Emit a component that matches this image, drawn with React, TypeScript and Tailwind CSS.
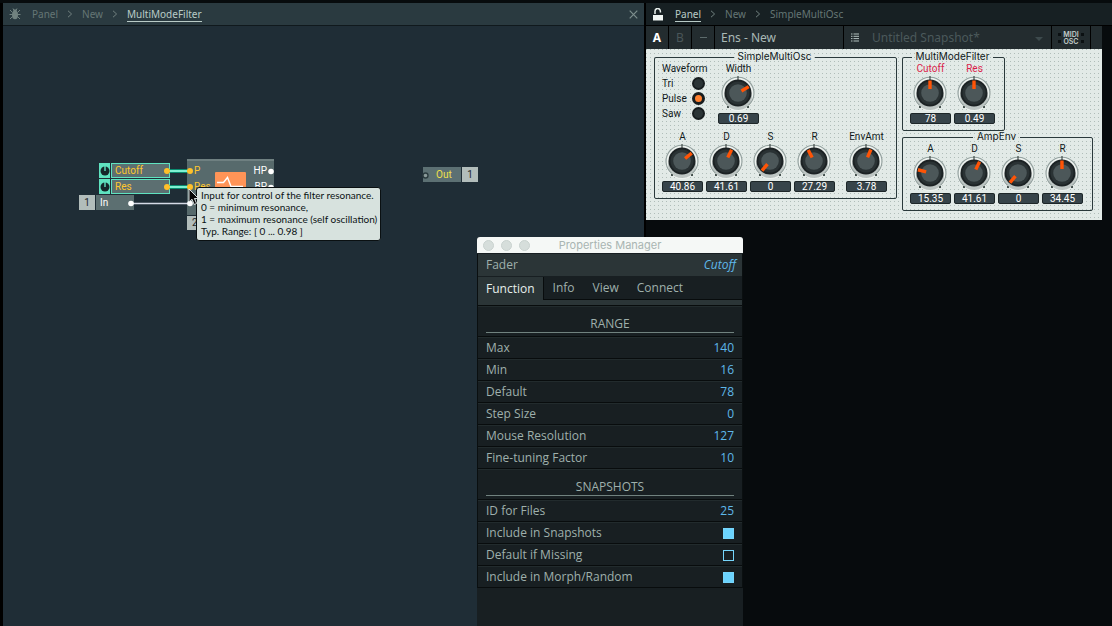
import { useId, useState } from "react";

type KnobProps = { label: string; initial: number; min?: number; max: number; accent?: boolean };

function Knob({ label, initial, min = 0, max, accent = false }: KnobProps) {
  const [value, setValue] = useState(initial);
  const angle = -140 + (280 * (value - min)) / (max - min);
  return (
    <label className="flex w-[41px] flex-col items-center">
      <span className={`h-3 text-[10px] leading-3 whitespace-nowrap ${accent ? "text-[#dc1f4c]" : "text-[#10181a]"}`}>
        {label}
      </span>
      <span className="relative block h-[38px] w-[41px]">
        <svg viewBox="-20 -18 41 38" className="block h-[38px] w-[41px]" aria-hidden="true">
          <circle r="17" cy="1" fill="#f1f5f3" opacity="0.8" />
          <path d="M-10.4 12.4A16 16 0 1 1 10.4 12.4" fill="none" stroke="#93a19f" strokeWidth="1.2" />
          <path d="M0-17V-13" stroke="#26302f" strokeWidth="1" />
          <rect x="-11" y="13" width="2" height="2" fill="#46524f" />
          <rect x="9" y="13" width="2" height="2" fill="#46524f" />
          <ellipse cy="4" rx="14" ry="13" fill="#8e9a98" opacity="0.5" />
          <circle r="13.5" fill="#1c2224" />
          <circle r="11.5" fill="#2a3234" />
          <circle r="8.8" fill="#4c5759" />
          <path d="M0-4V-12.500" stroke="#ff5406" strokeWidth="3.4" transform={`rotate(${angle})`} />
        </svg>
        <input
          type="range"
          min={min}
          max={max}
          step="any"
          value={value}
          onChange={(e) => setValue(Math.round(Number(e.target.value) * 100) / 100)}
          className="absolute inset-0 h-full w-full cursor-pointer opacity-0"
        />
      </span>
      <output className="h-[11px] w-full rounded-[2px] border border-[#1d2628] bg-[#37444a] text-center text-[10px] leading-[9px] text-white">
        {value}
      </output>
    </label>
  );
}

function Group({ title, children }: { title: string; children: React.ReactNode }) {
  return (
    <fieldset className="rounded-[2px] border border-[#2a393b] pr-[9px] pb-[6px] pl-[7px]">
      <legend className="mx-auto h-3 px-1 font-['Inter',sans-serif] text-[10px] leading-[10px] text-[#10181a]">{title}</legend>
      {children}
    </fieldset>
  );
}

function WaveformPicker() {
  const [wave, setWave] = useState("Pulse");
  return (
    <div role="radiogroup" aria-label="Waveform" className="w-[43px] text-[10px] text-[#10181a]">
      <div className="h-[13px] leading-3">Waveform</div>
      {["Tri", "Pulse", "Saw"].map((name) => (
        <label key={name} className="flex h-[15px] items-center justify-between leading-3">
          {name}
          <input
            type="radio"
            name="waveform"
            checked={wave === name}
            onChange={() => setWave(name)}
            className="size-[13px] appearance-none rounded-full border-2 border-[#171d1f] bg-[#2b3436] checked:border-[3px] checked:bg-[#ff8130]"
          />
        </label>
      ))}
    </div>
  );
}

function Crumbs({ items, active }: { items: string[]; active: number }) {
  return (
    <nav className="flex items-center text-[10px] leading-[14px]">
      {items.map((item, i) => (
        <span key={item} className="flex items-center">
          {i > 0 && (
            <svg viewBox="0 0 6 8" className="mx-[9px] h-2 w-[6px]" aria-hidden="true">
              <path d="M1 .8 4.6 4 1 7.2" fill="none" stroke="#71807f" />
            </svg>
          )}
          <a
            href="#"
            className={i === active ? "border-b border-[#b9cbc7] text-[#b9cbc7]" : "border-b border-transparent text-[#657675]"}
          >
            {item}
          </a>
        </span>
      ))}
    </nav>
  );
}

function Bug() {
  return (
    <svg viewBox="0 0 12 12" className="size-3" aria-hidden="true">
      <g fill="none" stroke="#71827f" strokeWidth="1">
        <path d="M4 .5 5 2.5M8 .5 7 2.5M1 2 3.5 4.500M11 2 8.500 4.500M.5 6.500H11.500M1 11 3.500 8.500M11 11 8.500 8.500" />
      </g>
      <ellipse cx="6" cy="7" rx="3" ry="4.200" fill="#71827f" />
      <circle cx="6" cy="3" r="1.800" fill="#71827f" />
    </svg>
  );
}

function ControlNode({ name, className }: { name: string; className: string }) {
  return (
    <div className={`absolute flex h-[15px] w-[71px] gap-px text-[10px] ${className}`}>
      <div className="flex w-[11px] items-center justify-center bg-[#5fe3c0]">
        <svg viewBox="0 0 10 10" className="size-[10px]" aria-hidden="true">
          <circle cx="5" cy="5" r="4.500" fill="#15272a" />
          <path d="M5 0V5" stroke="#5fe3c0" strokeWidth="1.400" />
        </svg>
      </div>
      <div className="flex-1 border border-[#5fe3c0] bg-[#5c6f71] pl-[3px] leading-[14px] text-[#ffc82e]">{name}</div>
    </div>
  );
}

function Patch() {
  return (
    <div className="relative flex-1 overflow-hidden bg-[#1f2d36] text-[10px] text-white">
      <ControlNode name="Cutoff" className="top-[137px] left-[96px]" />
      <ControlNode name="Res" className="top-[153px] left-[96px]" />

      <div className="absolute top-[169px] left-[76px] flex h-[15px] gap-px leading-[15px]">
        <span className="w-4 bg-[#b2bdbb] text-center text-[#1b2629]">1</span>
        <span className="w-[38px] bg-[#5c6f71] pl-1">In</span>
      </div>

      <div className="absolute top-[133px] left-[184px] h-14 w-[87px] border-t-2 border-[#6f8081] bg-[#576a6c]">
        <div className="flex justify-between pt-[2px] pr-[7px] pl-[7px] leading-4">
          <div className="text-[#ffc82e]">
            <div>P</div>
            <div>Res</div>
          </div>
          <div className="text-right">
            <div>HP</div>
            <div>BP</div>
          </div>
        </div>
        <svg viewBox="0 0 31 28" className="absolute top-[11px] left-7 h-7 w-[31px]" aria-hidden="true">
          <rect width="31" height="28" rx="1" fill="#ff9457" />
          <path d="M2 10.500H8.500L12.500 5.500L16 14.500H28" fill="none" stroke="#fff" strokeWidth="1.400" />
        </svg>
      </div>
      <div className="absolute top-[190px] left-[184px] h-[14px] w-4 bg-[#b2bdbb] pl-[5px] leading-[14px] text-[#1b2629]">2</div>

      <div className="absolute top-[141px] left-[420px] flex h-[15px] gap-px leading-[15px]">
        <span className="w-[38px] bg-[#5c7073] pl-[13px] text-[#f0e04a]">Out</span>
        <span className="w-4 bg-[#b2bdbb] text-center text-[#1b2629]">1</span>
      </div>

      <svg viewBox="0 0 480 210" className="absolute top-0 left-0 h-[210px] w-[480px]" aria-hidden="true">
        <g stroke="#0b8c70" strokeWidth="4">
          <path d="M164 145H187M164 161H187" />
        </g>
        <g stroke="#7ff0d2" strokeWidth="2">
          <path d="M164 145H187M164 161H187" />
        </g>
        <path d="M128 177.500H187" stroke="#d5dae6" strokeWidth="1.500" />
        <g fill="#ffc02a">
          <circle cx="164" cy="145" r="3" />
          <circle cx="187" cy="145" r="3" />
          <circle cx="164" cy="161" r="3" />
          <circle cx="187" cy="161" r="3" />
        </g>
        <g fill="#fff">
          <circle cx="128" cy="177.500" r="2.800" />
          <circle cx="187" cy="177.500" r="2.800" />
          <circle cx="268" cy="145.500" r="2.800" />
          <circle cx="268" cy="161.500" r="2.800" />
        </g>
        <circle cx="422.500" cy="149.500" r="2.500" fill="#8a9a9a" stroke="#2b3b3f" strokeWidth="1.400" />
      </svg>

      <div
        role="tooltip"
        className="absolute top-[161px] left-[193px] rounded-[3px] border border-[#0a1012] bg-[#d7e2de] pt-px pr-[3px] pb-[3px] pl-1 font-['Lato',sans-serif] text-[10px] leading-3 whitespace-nowrap text-[#0b1214]"
      >
        <p>Input for control of the filter resonance.</p>
        <p>0 = minimum resonance,</p>
        <p>1 = maximum resonance (self oscillation)</p>
        <p>Typ. Range: [ 0 ... 0.98 ]</p>
      </div>

      <svg viewBox="0 0 12 18" className="absolute top-[162px] left-[185px] h-[18px] w-3" aria-hidden="true">
        <path d="M1 1V14L4 11.200L6.200 16.500L8.600 15.500L6.400 10.500H10.500Z" fill="#050505" stroke="#e8eeee" strokeWidth="0.900" />
      </svg>
    </div>
  );
}

function Instrument() {
  return (
    <div className="flex w-fit gap-[5px] bg-[#e2eae7] bg-[conic-gradient(at_1px_1px,transparent_270deg,#b0bdb9_0deg)] bg-[size:4px_4px] pt-[2px] pr-[9px] pb-[9px] pl-2">
      <div>
        <Group title="SimpleMultiOsc">
          <div className="flex gap-[13px]">
            <WaveformPicker />
            <Knob label="Width" initial={0.69} max={0.97} />
          </div>
          <div className="mt-[7px] flex gap-[3px]">
            <Knob label="A" initial={40.86} max={60} />
            <Knob label="D" initial={41.61} max={70} />
            <Knob label="S" initial={0} max={1} />
            <Knob label="R" initial={27.29} max={68} />
            <div className="ml-2">
              <Knob label="EnvAmt" initial={3.78} max={6.5} />
            </div>
          </div>
        </Group>
      </div>
      <div className="flex flex-col items-start">
        <Group title="MultiModeFilter">
          <div className="flex gap-[3px]">
            <Knob label="Cutoff" initial={78} min={16} max={140} accent />
            <Knob label="Res" initial={0.49} max={0.98} accent />
          </div>
        </Group>
        <Group title="AmpEnv">
          <div className="flex gap-[3px]">
            <Knob label="A" initial={15.35} max={66} />
            <Knob label="D" initial={41.61} max={70} />
            <Knob label="S" initial={0} max={1} />
            <Knob label="R" initial={34.45} max={69} />
          </div>
        </Group>
      </div>
    </div>
  );
}

function Toolbar() {
  return (
    <div className="flex h-[23px] w-[456px] bg-[#232c2f] font-['Noto_Sans',sans-serif] text-xs text-[#a9b9b6]">
      <button className="w-[23px] border-r border-black font-bold text-white">A</button>
      <button className="w-[23px] border-r border-black text-[#4a5659]">B</button>
      <button className="flex w-[23px] items-center justify-center border-r border-black" aria-label="Minimize">
        <span className="h-px w-[7px] bg-[#5d6b6c]" />
      </button>
      <button className="w-[129px] border-r border-black pl-[6px] text-left">Ens - New</button>
      <button className="flex w-[22px] items-center justify-center" aria-label="Snapshot list">
        <svg viewBox="0 0 8 9" className="h-[9px] w-2" aria-hidden="true">
          <path d="M0 1H1.500M2.500 1H8M0 3.300H1.500M2.500 3.300H8M0 5.600H1.500M2.500 5.600H8M0 8H1.500M2.500 8H8" stroke="#b4c2c0" />
        </svg>
      </button>
      <div className="relative flex-1 border-r border-black">
        <select aria-label="Snapshot" className="h-full w-full appearance-none pl-[6px] text-[#4b595b]">
          <option>Untitled Snapshot*</option>
        </select>
        <svg viewBox="0 0 8 4" className="pointer-events-none absolute top-[11px] right-2 h-1 w-2" aria-hidden="true">
          <path d="M0 0H8L4 4Z" fill="#3d4a4d" />
        </svg>
      </div>
      <button className="flex w-[39px] items-center justify-center gap-[2px] border-r border-black font-['Inter',sans-serif] text-[7px] leading-[7px] font-semibold text-[#c2cdca]">
        <span className="flex flex-col gap-1">
          <span className="size-[3px] bg-[#0b1012]" />
          <span className="size-[3px] bg-[#0b1012]" />
        </span>
        <span>
          MIDI
          <br />
          OSC
        </span>
        <span className="flex flex-col gap-1">
          <span className="size-[3px] bg-[#0b1012]" />
          <span className="size-[3px] bg-[#0b1012]" />
        </span>
      </button>
      <span className="w-[11px]" />
    </div>
  );
}

const rowClass =
  "flex h-[22px] items-center justify-between border-b border-b-[#080c0d] border-t border-t-[#222b2d] px-2";

function NumberRow({ label, value }: { label: string; value: string }) {
  const id = useId();
  return (
    <div className={rowClass}>
      <label htmlFor={id}>{label}</label>
      <input id={id} defaultValue={value} className="w-16 bg-transparent text-right text-[#5fb8ea]" />
    </div>
  );
}

function CheckRow({ label, on = false }: { label: string; on?: boolean }) {
  const id = useId();
  return (
    <div className={rowClass}>
      <label htmlFor={id}>{label}</label>
      <input
        id={id}
        type="checkbox"
        defaultChecked={on}
        className="size-[11px] appearance-none border border-[#76d5fb] checked:bg-[#6bd3fd]"
      />
    </div>
  );
}

function SectionTitle({ children }: { children: string }) {
  return (
    <div className="h-[31px] border-t border-b border-t-[#222b2d] border-b-[#080c0d] px-2 pt-2">
      <h2 className="h-[18px] border-b border-[#71827f] text-center leading-[18px]">{children}</h2>
    </div>
  );
}

function PropertiesManager() {
  const tabs = ["Function", "Info", "View", "Connect"];
  return (
    <section
      aria-label="Properties Manager"
      className="absolute top-[237px] bottom-0 left-[477px] w-[266px] overflow-hidden rounded-t-[3px] bg-[#181f22] font-['Open_Sans',sans-serif] text-xs leading-4 text-[#9fb0ac]"
    >
      <header className="flex h-4 items-center bg-[#f5f8f6] pl-[6px]">
        <div className="flex gap-[7px]">
          <button aria-label="Close" className="size-[11px] rounded-full border border-[#c9d2cf] bg-[#d6dedb]" />
          <button aria-label="Minimize" className="size-[11px] rounded-full border border-[#c9d2cf] bg-[#d6dedb]" />
          <button aria-label="Zoom" className="size-[11px] rounded-full border border-[#c9d2cf] bg-[#d6dedb]" />
        </div>
        <h1 className="flex-1 pr-[53px] text-center font-['Inter',sans-serif] text-[11px] text-[#a9b5b2]">Properties Manager</h1>
      </header>
      <div className="border-x border-[#0a0f10]">
        <div className="mt-px flex h-[22px] items-center justify-between bg-[#2b3537] pr-[6px] pl-2">
          <span>Fader</span>
          <span className="text-[#5fb8ea] italic">Cutoff</span>
        </div>
        <div role="tablist" className="mt-px flex h-[23px] border-b border-[#080c0d]">
          {tabs.map((tab, i) => (
            <button
              key={tab}
              role="tab"
              aria-selected={i === 0}
              className={
                i === 0
                  ? "-mb-px h-[23px] border-r border-[#080c0d] bg-[#2b3537] px-2 text-[#e6efec]"
                  : "px-[9px] text-[#9fb0ac]"
              }
            >
              {tab}
            </button>
          ))}
        </div>
        <div className="h-[6px] border-b border-[#080c0d] bg-[#2b3537]" />
        <SectionTitle>RANGE</SectionTitle>
        <NumberRow label="Max" value="140" />
        <NumberRow label="Min" value="16" />
        <NumberRow label="Default" value="78" />
        <NumberRow label="Step Size" value="0" />
        <NumberRow label="Mouse Resolution" value="127" />
        <NumberRow label="Fine-tuning Factor" value="10" />
        <SectionTitle>SNAPSHOTS</SectionTitle>
        <NumberRow label="ID for Files" value="25" />
        <CheckRow label="Include in Snapshots" on />
        <CheckRow label="Default if Missing" />
        <CheckRow label="Include in Morph/Random" on />
      </div>
    </section>
  );
}

export default function App() {
  return (
    <main className="relative grid min-h-screen grid-cols-[646fr_466fr] overflow-hidden bg-[#070b0d] pt-[3px] font-['Roboto',sans-serif]">
      <section className="flex flex-col border-r-2 border-l-[3px] border-black">
        <header className="flex h-[23px] items-center border-b border-[#10191d] bg-[#2a3a40] pr-[6px] pl-[6px] font-['Noto_Sans',sans-serif]">
          <Bug />
          <div className="ml-[11px] flex-1">
            <Crumbs items={["Panel", "New", "MultiModeFilter"]} active={2} />
          </div>
          <button aria-label="Close pane">
            <svg viewBox="0 0 9 9" className="size-[9px]" aria-hidden="true">
              <path d="M.7 .7 8.300 8.300M8.300 .7 .7 8.300" stroke="#7d8e8d" strokeWidth="1.200" />
            </svg>
          </button>
        </header>
        <Patch />
      </section>
      <section>
        <header className="flex h-[23px] items-center border-b border-black bg-[#172023] pl-[7px] font-['Noto_Sans',sans-serif]">
          <svg viewBox="0 0 10 13" className="mr-3 h-[13px] w-[10px]" aria-hidden="true">
            <path d="M2 6V3.800A2.500 2.800 0 0 1 7.400 3.200V4.500" fill="none" stroke="#e8efed" strokeWidth="1.500" />
            <rect y="7" width="10" height="5.500" fill="#f0f5f3" />
          </svg>
          <Crumbs items={["Panel", "New", "SimpleMultiOsc"]} active={0} />
        </header>
        <Toolbar />
        <Instrument />
      </section>
      <PropertiesManager />
    </main>
  );
}
